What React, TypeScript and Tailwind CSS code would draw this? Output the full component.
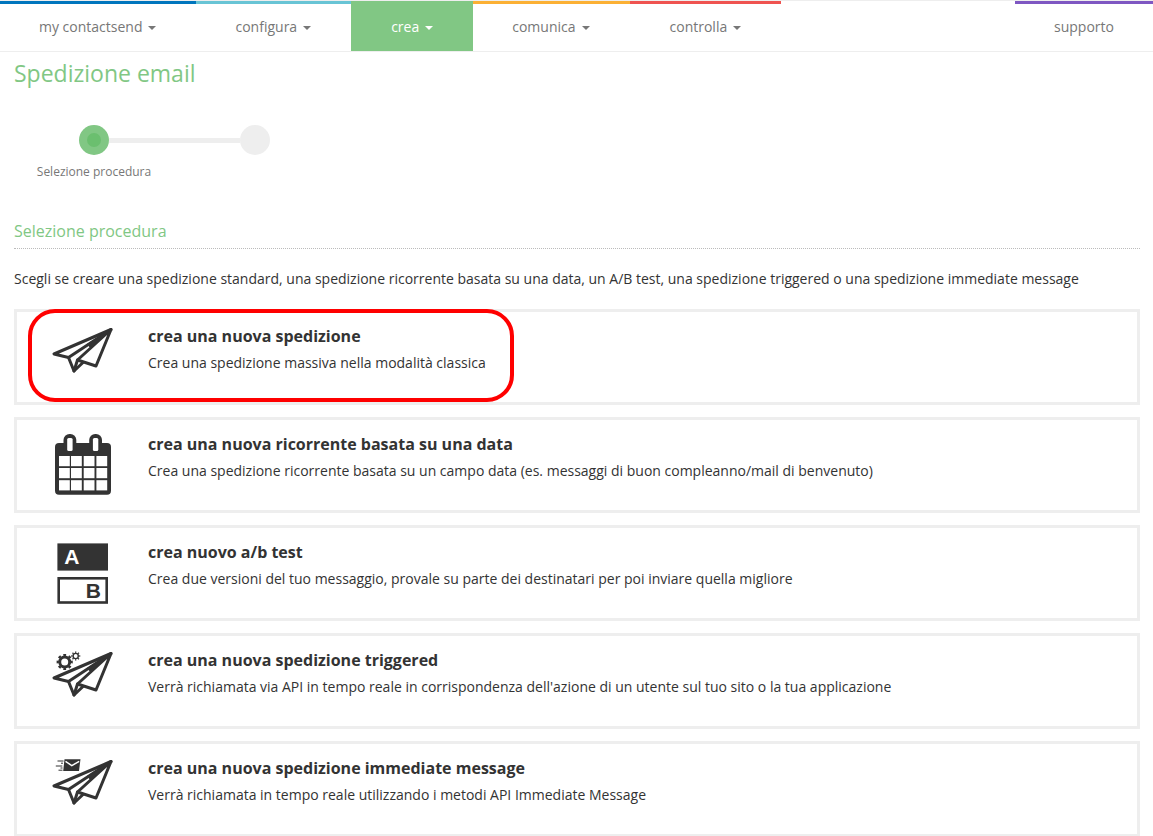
import React from "react";

const menu = [
  { label: "my contactsend", style: "border-[#0075bd] text-[#777] pl-[39px]" },
  { label: "configura", style: "border-[#68c4d5] text-[#777] pl-[39px]" },
  { label: "crea", style: "border-[#81c784] bg-[#81c784] text-white pl-10" },
  { label: "comunica", style: "border-[#fbb034] text-[#777] pl-[39px]" },
  { label: "controlla", style: "border-[#ef5350] text-[#777] pl-10" },
];

function Plane() {
  return (
    <g fill="none" stroke="#333" strokeWidth="3" strokeLinejoin="round" strokeLinecap="round">
      <path d="M60 4.5 3 29l14.5 3.5L23 46l9-8.5" />
      <path d="M60 4.5 17.5 32.5M60 4.5 26.5 35l18.5 6z" />
      <path d="M26.5 35 23 46" />
      <path d="M60 4.5 36 19.5l4 3z" fill="#333" strokeWidth="1" />
    </g>
  );
}

function PlaneIcon() {
  return (
    <svg viewBox="0 0 64 64" className="w-16 h-16 shrink-0" aria-hidden="true">
      <Plane />
    </svg>
  );
}

function CalendarIcon() {
  const cols = [8, 20, 32.7, 45.4];
  const rows = [23, 35, 47.2];
  return (
    <svg viewBox="0 0 64 64" className="w-16 h-16 shrink-0" aria-hidden="true">
      <rect x="4" y="10" width="56" height="51.7" rx="4" fill="#333" />
      <rect x="12.5" y="1" width="12.8" height="20" rx="6" fill="#333" />
      <rect x="38.2" y="1" width="12.8" height="20" rx="6" fill="#333" />
      <rect x="16.2" y="5" width="5.4" height="13" rx="1.5" fill="#fff" />
      <rect x="41.9" y="5" width="5.4" height="13" rx="1.5" fill="#fff" />
      {rows.map((y) =>
        cols.map((x) => <rect key={`${x}-${y}`} x={x} y={y} width="10.8" height="10.2" fill="#fff" />)
      )}
    </svg>
  );
}

function AbTestIcon() {
  return (
    <svg viewBox="0 0 64 64" className="w-16 h-16 shrink-0 font-['Liberation_Sans',sans-serif] font-bold text-[21px]" aria-hidden="true">
      <rect x="6.4" y="2.4" width="50.6" height="27.2" fill="#333" />
      <text x="13.2" y="23.4" fill="#fff">A</text>
      <rect x="7.7" y="37.3" width="48" height="24.2" fill="#fff" stroke="#333" strokeWidth="2.6" />
      <text x="34.8" y="56.6" fill="#333">B</text>
    </svg>
  );
}

function TriggeredIcon() {
  return (
    <svg viewBox="0 0 64 64" className="w-16 h-16 shrink-0" aria-hidden="true">
      <Plane />
      <g fill="none" stroke="#333">
        <circle cx="13.7" cy="13" r="5" strokeWidth="3" />
        <circle cx="13.7" cy="13" r="7" strokeWidth="2.2" pathLength="80" strokeDasharray="5 5" strokeDashoffset="2.5" />
        <circle cx="24.7" cy="7" r="2.6" strokeWidth="1.4" />
        <circle cx="24.7" cy="7" r="3.8" strokeWidth="1.6" pathLength="80" strokeDasharray="4 6" strokeDashoffset="2" />
      </g>
    </svg>
  );
}

function ImmediateIcon() {
  return (
    <svg viewBox="0 0 64 64" className="w-16 h-16 shrink-0" aria-hidden="true">
      <Plane />
      <path d="M13.5 2.3h16L28 14H12.2z" fill="#333" />
      <path d="m14.5 4.3 6.3 4.4 7.4-4.4" fill="none" stroke="#fff" strokeWidth="1.5" />
      <path d="M6.5 4h6M10 6.2h2M4.8 9h6.5M9.5 11h2M7.5 13.2h4" fill="none" stroke="#333" strokeWidth="1" />
    </svg>
  );
}

const procedures = [
  {
    title: "crea una nuova spedizione",
    text: "Crea una spedizione massiva nella modalità classica",
    icon: <PlaneIcon />,
    highlighted: true,
  },
  {
    title: "crea una nuova ricorrente basata su una data",
    text: "Crea una spedizione ricorrente basata su un campo data (es. messaggi di buon compleanno/mail di benvenuto)",
    icon: <CalendarIcon />,
  },
  {
    title: "crea nuovo a/b test",
    text: "Crea due versioni del tuo messaggio, provale su parte dei destinatari per poi inviare quella migliore",
    icon: <AbTestIcon />,
  },
  {
    title: "crea una nuova spedizione triggered",
    text: "Verrà richiamata via API in tempo reale in corrispondenza dell'azione di un utente sul tuo sito o la tua applicazione",
    icon: <TriggeredIcon />,
  },
  {
    title: "crea una nuova spedizione immediate message",
    text: "Verrà richiamata in tempo reale utilizzando i metodi API Immediate Message",
    icon: <ImmediateIcon />,
  },
];

export default function App() {
  return (
    <div className="min-h-screen bg-white text-[#333] text-sm font-['Open_Sans',sans-serif]">
      {/* Top menu */}
      <nav className="flex justify-between border-y border-[#eee]">
        <div className="flex">
          {menu.map((item) => (
            <button
              key={item.label}
              type="button"
              className={`flex items-center gap-1.5 h-[50px] pr-10 pb-[2px] border-t-3 whitespace-nowrap ${item.style}`}
            >
              {item.label}
              <svg viewBox="0 0 8 4" className="w-2 h-1 mt-0.5" fill="currentColor" aria-hidden="true">
                <path d="M0 0h8L4 4z" />
              </svg>
            </button>
          ))}
        </div>
        <a href="#" className="flex items-center h-[50px] px-[39px] pb-[2px] border-t-3 border-[#7e57c2] text-[#777]">
          supporto
        </a>
      </nav>

      <main className="pl-[14px] pr-[13px] pt-1.5">
        <h1 className="text-[23px] leading-[30px] text-[#81c784]">Spedizione email</h1>

        {/* Steps */}
        <div className="mt-[37px]">
          <div className="flex items-center pl-[65px]">
            <span className="flex items-center justify-center w-[30px] h-[30px] rounded-full bg-[#81c784]">
              <span className="w-[14px] h-[14px] rounded-full bg-[#6bbf6f]" />
            </span>
            <span className="w-[131px] h-[5px] bg-[#eee]" />
            <span className="w-[30px] h-[30px] rounded-full bg-[#eee]" />
          </div>
          <p className="w-40 mt-[7px] text-center text-xs leading-5 text-[#777]">Selezione procedura</p>
        </div>

        <h2 className="mt-[37px] pb-[5px] text-base leading-6 text-[#81c784] border-b border-dotted border-[#bbb]">
          Selezione procedura
        </h2>
        <p className="mt-5 leading-5">
          Scegli se creare una spedizione standard, una spedizione ricorrente basata su una data, un A/B test, una
          spedizione triggered o una spedizione immediate message
        </p>

        <div className="flex flex-col gap-3 mt-5">
          {procedures.map((item) => (
            <a
              key={item.title}
              href="#"
              className="relative flex gap-[33px] min-h-24 pl-[34px] pr-4 pt-[13px] border-3 border-[#eee]"
            >
              {item.icon}
              <div>
                <h3 className="text-base leading-[22px] font-bold">{item.title}</h3>
                <p className="mt-[5px] leading-[22px]">{item.text}</p>
              </div>
              {item.highlighted && (
                <span className="absolute -top-[3px] left-[11px] w-[486px] h-[93px] border-4 border-[#f00] rounded-[27px]" />
              )}
            </a>
          ))}
        </div>
      </main>
    </div>
  );
}
